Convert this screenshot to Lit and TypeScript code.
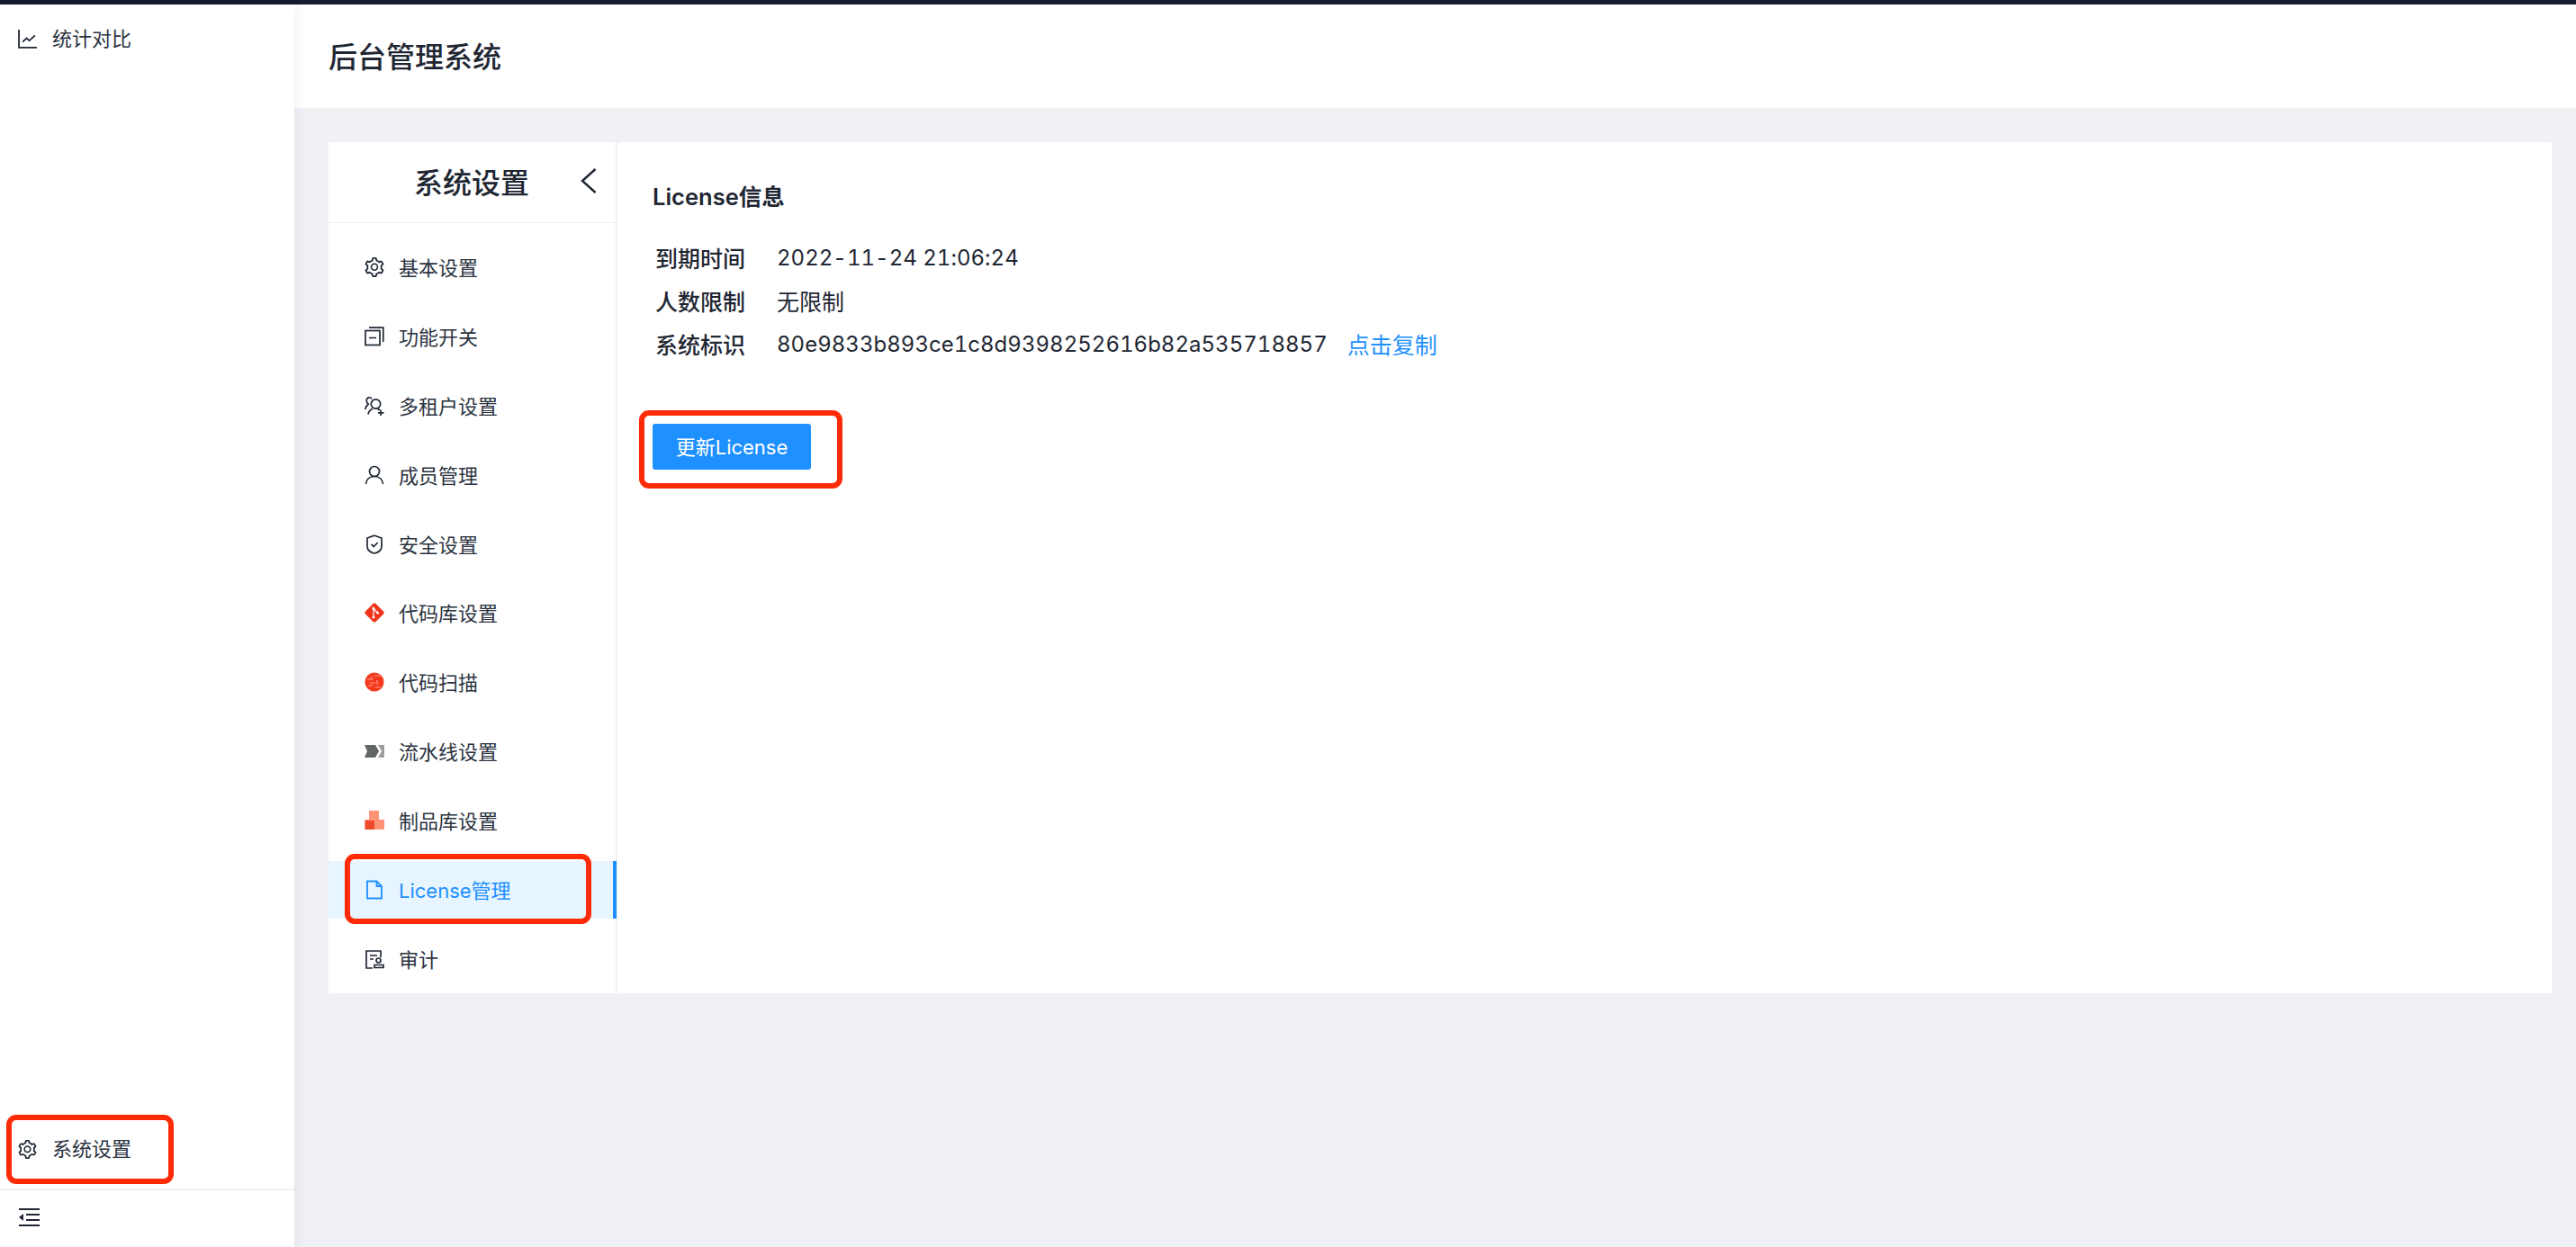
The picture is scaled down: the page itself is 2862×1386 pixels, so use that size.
import { LitElement, html, css, svg } from "lit";
import { customElement } from "lit/decorators.js";

const GEAR = "M924.8 625.7l-65.5-56c3.1-19 4.7-38.4 4.7-57.8s-1.6-38.8-4.7-57.8l65.5-56a32.03 32.03 0 0 0 9.3-35.2l-.9-2.6a443.74 443.74 0 0 0-79.7-137.9l-1.8-2.1a32.12 32.12 0 0 0-35.1-9.5l-81.3 28.9c-30-24.6-63.5-44-99.7-57.6l-15.7-85a32.05 32.05 0 0 0-25.8-25.7l-2.7-.5c-52.1-9.4-106.9-9.4-159 0l-2.7.5a32.05 32.05 0 0 0-25.8 25.7l-15.8 85.4a351.86 351.86 0 0 0-99 57.4l-81.9-29.1a32 32 0 0 0-35.1 9.5l-1.8 2.1a446.02 446.02 0 0 0-79.7 137.9l-.9 2.6c-4.5 12.5-.8 26.5 9.3 35.2l66.3 56.6c-3.1 18.8-4.6 38-4.6 57.1 0 19.2 1.5 38.4 4.6 57.1L99 625.5a32.03 32.03 0 0 0-9.3 35.2l.9 2.6c18.1 50.4 44.9 96.9 79.7 137.9l1.8 2.1a32.12 32.12 0 0 0 35.1 9.5l81.9-29.1c29.8 24.5 63.1 43.9 99 57.4l15.8 85.4a32.05 32.05 0 0 0 25.8 25.7l2.7.5a449.4 449.4 0 0 0 159 0l2.7-.5a32.05 32.05 0 0 0 25.8-25.7l15.7-85a350 350 0 0 0 99.7-57.6l81.3 28.9a32 32 0 0 0 35.1-9.5l1.8-2.1c34.8-41.1 61.6-87.5 79.7-137.9l.9-2.6c4.5-12.3.8-26.3-9.3-35zM788.3 465.9c2.5 15.1 3.8 30.6 3.8 46.1s-1.3 31-3.8 46.1l-6.6 40.1 74.7 63.9a370.03 370.03 0 0 1-42.6 73.6L721 702.8l-31.4 25.8c-23.9 19.6-50.5 35-79.3 45.8l-38.1 14.3-17.9 97a377.5 377.5 0 0 1-85 0l-17.9-97.2-37.8-14.5c-28.5-10.8-55-26.2-78.7-45.7l-31.4-25.9-93.4 33.2c-17-22.9-31.2-47.6-42.6-73.6l75.5-64.5-6.5-40c-2.4-14.9-3.7-30.3-3.7-45.5 0-15.3 1.2-30.6 3.7-45.5l6.5-40-75.5-64.5c11.3-26.1 25.6-50.7 42.6-73.6l93.4 33.2 31.4-25.9c23.7-19.5 50.2-34.9 78.7-45.7l37.9-14.3 17.9-97.2c28.1-3.2 56.8-3.2 85 0l17.9 97 38.1 14.3c28.7 10.8 55.4 26.2 79.3 45.8l31.4 25.8 92.8-32.9c17 22.9 31.2 47.6 42.6 73.6L781.8 426l6.5 39.9zM512 326c-97.2 0-176 78.8-176 176s78.8 176 176 176 176-78.8 176-176-78.8-176-176-176zm79.2 255.2A111.6 111.6 0 0 1 512 614c-29.9 0-58-11.7-79.2-32.8A111.6 111.6 0 0 1 400 502c0-29.9 11.7-58 32.8-79.2C454 401.6 482.1 390 512 390c29.9 0 58 11.6 79.2 32.8A111.6 111.6 0 0 1 624 502c0 29.9-11.7 58-32.8 79.2z";

const gear = html`<svg class="ic" viewBox="64 64 896 896" fill="#1f2733"><path d=${GEAR}></path></svg>`;
const stroke = (c: unknown) => html`<svg class="ic" viewBox="0 0 22 22" fill="none" stroke="#1f2733" stroke-width="1.7">${c}</svg>`;

const icons: Record<string, unknown> = {
  gear,
  toggle: stroke(svg`<rect x="1" y="4.500" width="16" height="16"></rect><path d="M5 1.200h15.800V17M5 12.500h8"></path>`),
  tenant: stroke(svg`<circle cx="12.500" cy="9" r="5.200"></circle><path d="M8 3.500C7 1 2.500 1 2.200 5c-.1 1.800.8 3 2 4.200C2.500 10.500 1 12.500.8 15M4 20.500c.5-3 2.500-5.300 5-6.300M14.500 14.600c1 .3 1.800.7 2.500 1.300"></path><path d="M18 15.500v6.500M15 18.800h6.500"></path>`),
  user: stroke(svg`<circle cx="11" cy="7" r="5.500"></circle><path d="M1.500 21c.5-5 4-8.500 9.500-8.500s9 3.500 9.500 8.500"></path>`),
  shield: stroke(svg`<path d="M11 1.200 19 4v9.500c0 4-4 6.800-8 7.500-4-.7-8-3.500-8-7.500V4z"></path><path d="m7.500 10.800 2.700 2.700 4.500-4.500"></path>`),
  git: html`<svg class="ic" viewBox="0 0 22 22"><path fill="#f0341a" d="M1 9.500 9.500 1a2.100 2.100 0 0 1 3 0L21 9.500a2.100 2.100 0 0 1 0 3L12.500 21a2.100 2.100 0 0 1-3 0L1 12.500a2.100 2.100 0 0 1 0-3z"></path><path fill="none" stroke="#fff" stroke-width="1.200" d="M9 5l5 6M10 7v9"></path><circle cx="10" cy="6.500" r="1.500" fill="#fff"></circle><circle cx="14.500" cy="11" r="1.500" fill="#fff"></circle><circle cx="10" cy="16" r="1.500" fill="#fff"></circle></svg>`,
  scan: html`<svg class="ic" viewBox="0 0 22 22"><circle cx="11" cy="11" r="10.500" fill="#f4391c"></circle><path fill="none" stroke="#ff9c86" stroke-width="1.200" d="M3 8h5M11 4h8M6 12h6M14 9v5M4 15h5M12 17h6M8 5v4"></path></svg>`,
  flow: html`<svg class="ic" viewBox="0 0 22 22"><path fill="#5f6663" d="M0 4h12l4 7-4 7H0l3-7z"></path><path fill="#9b9d9c" d="M15 4h7v14h-7l4-7z"></path></svg>`,
  box: html`<svg class="ic" viewBox="0 0 22 22"><path fill="#ff9378" d="M5 0h11v10h6v11H0V10h5z"></path><rect x="1" y="11" width="10" height="10" fill="#ef4a2b"></rect></svg>`,
  file: html`<svg class="ic" viewBox="0 0 22 22" fill="none" stroke="#1f90ff" stroke-width="1.800"><path d="M3 1.500h10.500L19 7v13.500H3z"></path><path d="M13.500 1.500V7H19"></path></svg>`,
  audit: stroke(svg`<path d="M18 9V2H2v19h7M6 7h8M6 11h4"></path><circle cx="15.500" cy="12.500" r="2.500"></circle><path d="M11 20.500v-3h10v3z"></path>`),
};

const items: { icon: string; label: string; active?: boolean }[] = [
  { icon: "gear", label: "基本设置" },
  { icon: "toggle", label: "功能开关" },
  { icon: "tenant", label: "多租户设置" },
  { icon: "user", label: "成员管理" },
  { icon: "shield", label: "安全设置" },
  { icon: "git", label: "代码库设置" },
  { icon: "scan", label: "代码扫描" },
  { icon: "flow", label: "流水线设置" },
  { icon: "box", label: "制品库设置" },
  { icon: "file", label: "License管理", active: true },
  { icon: "audit", label: "审计" },
];

const rows: [string, string][] = [
  ["到期时间", "2022-11-24 21:06:24"],
  ["人数限制", "无限制"],
  ["系统标识", "80e9833b893ce1c8d9398252616b82a535718857"],
];

@customElement("app-root")
export class AppRoot extends LitElement {
  static styles = css`
    :host {
      display: flex;
      flex-direction: column;
      width: 2862px;
      height: 1386px;
      overflow: hidden;
      background: #f0f1f5;
      color: #1f2733;
      font-family: Inter, "Noto Sans CJK SC", sans-serif;
      font-size: 24px;
    }
    .top { height: 5px; background: #141c2e; flex: none; }
    .body { flex: 1; display: flex; min-height: 0; }
    .side {
      width: 327px;
      flex: none;
      display: flex;
      flex-direction: column;
      background: #fff;
      box-shadow: 3px 0 10px rgba(30, 40, 70, 0.06);
      position: relative;
      z-index: 1;
    }
    .side-item {
      display: flex;
      align-items: center;
      gap: 17px;
      padding-left: 20px;
      font-size: 22px;
      color: #2b333f;
    }
    .side-item span { padding-bottom: 4px; }
    .side-first { height: 76px; }
    .spacer { flex: 1; }
    .side-bottom { height: 76px; flex: none; margin-bottom: 6px; position: relative; }
    .collapse {
      height: 65px;
      flex: none;
      box-sizing: border-box;
      border-top: 2px solid #eef0f3;
      display: flex;
      align-items: center;
      padding: 0 0 4px 21px;
    }
    .ic { width: 21px; height: 21px; flex: none; display: block; }
    .main { flex: 1; display: flex; flex-direction: column; min-width: 0; }
    .head {
      height: 115px;
      flex: none;
      background: #fff;
      display: flex;
      align-items: center;
      padding: 0 0 4px 38px;
      box-sizing: border-box;
      font-size: 32px;
      font-weight: 500;
    }
    .content { padding: 38px 27px 0 38px; display: flex; }
    .card { flex: 1; display: flex; height: 946px; gap: 2px; }
    .menu {
      width: 319px;
      flex: none;
      background: #fff;
      display: flex;
      flex-direction: column;
    }
    .menu-head {
      height: 86px;
      flex: none;
      border-bottom: 1px solid #eceef2;
      display: flex;
      align-items: center;
      justify-content: flex-end;
      gap: 57px;
      padding: 0 21px 3px 0;
      box-sizing: content-box;
      font-size: 32px;
      font-weight: 500;
    }
    .chev { width: 18px; height: 28px; display: block; }
    .list { display: flex; flex-direction: column; gap: 12.9px; padding-top: 17px; }
    .item {
      height: 64px;
      flex: none;
      display: flex;
      align-items: center;
      gap: 16px;
      padding-left: 40px;
      font-size: 22px;
      color: #2b333f;
      position: relative;
    }
    .item .ic { width: 22px; height: 22px; }
    .item span { padding-bottom: 2px; }
    .item.active { background: #e6f5ff; color: #1f90ff; }
    .item.active::after {
      content: "";
      position: absolute;
      right: -1px;
      top: 0;
      bottom: 0;
      width: 4px;
      background: #1f90ff;
    }
    .panel {
      flex: 1;
      background: #fff;
      padding: 45px 0 0 39px;
      box-sizing: border-box;
    }
    .panel h2 { margin: 0 0 27px; font-size: 25.5px; font-weight: 600; line-height: 32px; }
    .row { display: flex; align-items: center; height: 48px; }
    .row b { width: 138px; padding-left: 3px; box-sizing: border-box; font-weight: 500; font-size: 25px; }
    .val { font-size: 24px; letter-spacing: 0.02px; font-variant-numeric: tabular-nums; }
    .val.cjk { font-size: 25px; letter-spacing: 0; }
    .link { margin-left: 22px; color: #1f90ff; font-size: 25px; }
    .btn-wrap { margin-top: 65px; position: relative; width: 176px; }
    .btn {
      width: 176px;
      height: 51px;
      border: 0;
      border-radius: 3px;
      background: #1f90ff;
      color: #fff;
      font: inherit;
      font-size: 22px;
      padding: 0 0 4px;
      display: block;
    }
    .mark {
      position: absolute;
      border: 6px solid #ff2a06;
      border-radius: 11px;
      box-sizing: border-box;
      pointer-events: none;
    }
    .mark-side { left: 7px; top: 0; width: 186px; height: 77px; }
    .mark-item { left: 18px; top: -8px; width: 274px; height: 78px; }
    .mark-btn { left: -15px; top: -15px; width: 226px; height: 87px; }
  `;

  render() {
    return html`
      <div class="top"></div>
      <div class="body">
        <aside class="side">
          <div class="side-item side-first">
            <svg class="ic" viewBox="0 0 20 20" fill="none" stroke="#1f2733" stroke-width="1.700"><path d="M1 0v19h19M5 13l4-4 3 2.500L18 6"></path></svg>
            <span>统计对比</span>
          </div>
          <div class="spacer"></div>
          <div class="side-item side-bottom">
            ${gear}<span>系统设置</span>
            <div class="mark mark-side"></div>
          </div>
          <div class="collapse">
            <svg width="23" height="20" viewBox="0 0 23 20" fill="#1f2733"><rect width="23" height="2"></rect><rect x="8" y="6" width="15" height="2"></rect><rect x="8" y="12" width="15" height="2"></rect><rect y="18" width="23" height="2"></rect><path d="M0 10l5-4v8z"></path></svg>
          </div>
        </aside>
        <div class="main">
          <header class="head">后台管理系统</header>
          <div class="content">
            <div class="card">
              <nav class="menu">
                <div class="menu-head">
                  <span>系统设置</span>
                  <svg class="chev" viewBox="0 0 18 28" fill="none" stroke="#1f2733" stroke-width="2.400"><path d="M16.500 1 2 14l14.500 13"></path></svg>
                </div>
                <div class="list">
                  ${items.map(
                    (it) => html`<div class="item ${it.active ? "active" : ""}">
                      ${icons[it.icon]}<span>${it.label}</span>
                      ${it.active ? html`<div class="mark mark-item"></div>` : ""}
                    </div>`
                  )}
                </div>
              </nav>
              <section class="panel">
                <h2>License信息</h2>
                ${rows.map(
                  (r, i) => html`<div class="row">
                    <b>${r[0]}</b><span class="val ${i === 1 ? "cjk" : ""}">${r[1]}</span>
                    ${i === 2 ? html`<span class="link">点击复制</span>` : ""}
                  </div>`
                )}
                <div class="btn-wrap">
                  <button class="btn">更新License</button>
                  <div class="mark mark-btn"></div>
                </div>
              </section>
            </div>
          </div>
        </div>
      </div>
    `;
  }
}
